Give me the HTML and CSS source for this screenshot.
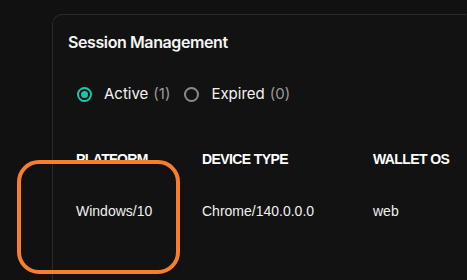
FILE: index.html
```html
<!DOCTYPE html>
<html lang="en">
<head>
    <meta charset="UTF-8">
    <meta name="viewport" content="width=device-width, initial-scale=1.0">
    <title>Session Management</title>
    <link rel="stylesheet" href="styles.css">
</head>
<body>
    <div class="card">
        <h2 class="card-title">Session Management</h2>

        <div class="tabs">
            <label class="tab">
                <span class="radio checked"></span>
                <span class="tab-label">Active</span>
                <span class="count">(1)</span>
            </label>
            <label class="tab">
                <span class="radio"></span>
                <span class="tab-label">Expired</span>
                <span class="count">(0)</span>
            </label>
        </div>

        <table class="sessions">
            <thead>
                <tr>
                    <th class="col-platform">PLATFORM</th>
                    <th class="col-device">DEVICE TYPE</th>
                    <th>WALLET OS</th>
                </tr>
            </thead>
            <tbody>
                <tr>
                    <td>Windows/10</td>
                    <td>Chrome/140.0.0.0</td>
                    <td>web</td>
                </tr>
            </tbody>
        </table>
    </div>

    <!-- highlight drawn on top of the screenshot -->
    <div class="highlight"></div>
</body>
</html>
```

FILE: styles.css
```css
html, body {
    height: 100%;
}
body {
    margin: 0;
    padding: 14px 0 0 52px;
    background: #111111;
    color: #f2f2f2;
    font-family: Inter, "Noto Sans", sans-serif;
    overflow: hidden;
    box-sizing: border-box;
}
/* card continues past the window, so only top and left edges show */
.card {
    height: 100%;
    border-top: 1px solid #2a2a2a;
    border-left: 1px solid #2a2a2a;
    border-top-left-radius: 10px;
    background: #121212;
    padding: 17px 0 0 15px;
    box-sizing: border-box;
    overflow: hidden;
}
.card-title {
    margin: 0;
    font-size: 16px;
    line-height: 20px;
    font-weight: 600;
    letter-spacing: -0.4px;
    color: #f5f5f5;
}
.tabs {
    display: flex;
    align-items: center;
    gap: 14px;
    margin: 30px 0 0 9px;
    line-height: 24px;
    font-size: 15px;
}
.tab {
    display: flex;
    align-items: center;
}
.radio {
    width: 15px;
    height: 15px;
    border: 2px solid #8a8a8a;
    border-radius: 50%;
    box-sizing: border-box;
    margin-right: 12px;
    display: flex;
    align-items: center;
    justify-content: center;
}
.radio.checked {
    border-color: #1cc7a8;
}
.radio.checked::after {
    content: "";
    width: 7px;
    height: 7px;
    border-radius: 50%;
    background: #1cc7a8;
}
.tab-label {
    color: #f2f2f2;
}
.count {
    color: #9a9a9a;
    margin-left: 5px;
}
.sessions {
    margin-top: 31px;
    border-collapse: collapse;
    table-layout: fixed;
    font-family: "Liberation Sans", Arial, sans-serif;
    font-size: 14px;
    line-height: 20px;
}
.sessions th {
    text-align: left;
    font-weight: 700;
    letter-spacing: -0.6px;
    padding: 12px 8px;
    color: #ffffff;
}
.sessions td {
    padding: 20px 8px;
    color: #f0f0f0;
}
.col-platform {
    width: 110px;
}
.col-device {
    width: 155px;
}
.highlight {
    position: absolute;
    left: 17px;
    top: 160px;
    width: 163px;
    height: 114px;
    border: 4px solid #f97e2b;
    border-radius: 22px;
    box-sizing: border-box;
}
```
